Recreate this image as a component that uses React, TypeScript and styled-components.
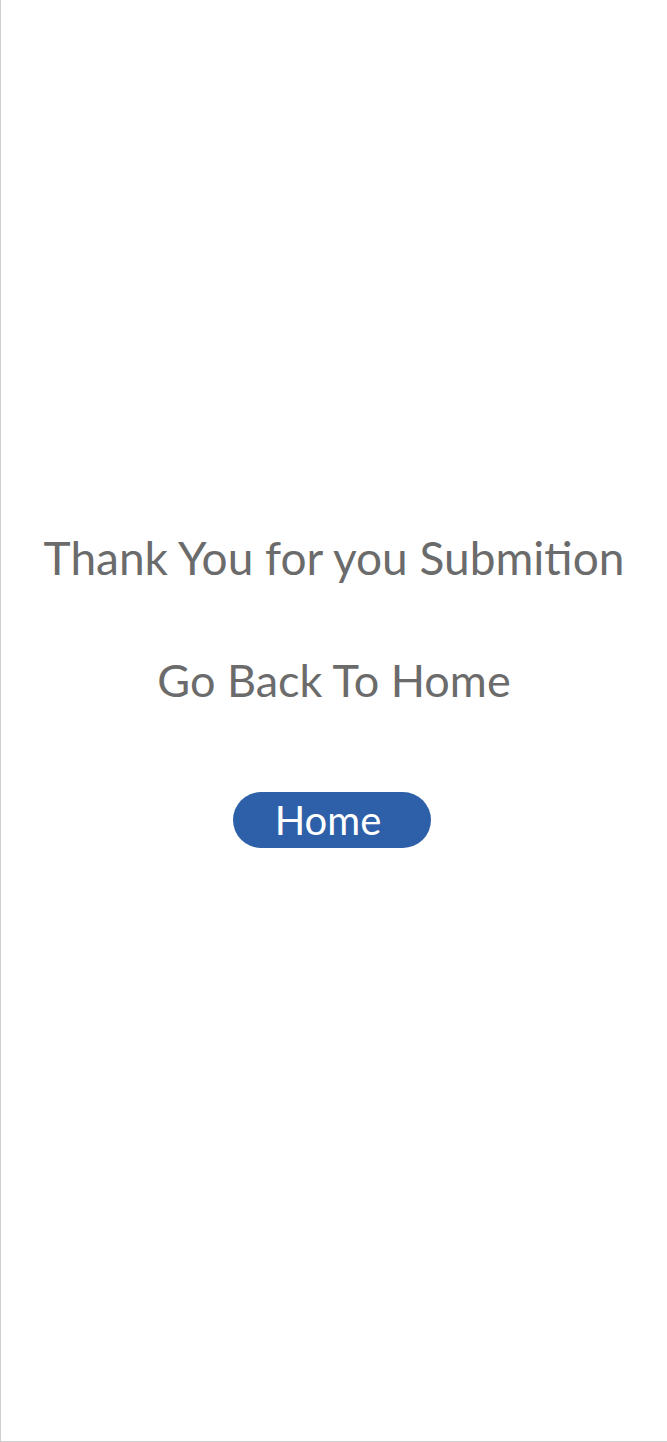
import React from "react";
import styled, { createGlobalStyle } from "styled-components";

const Global = createGlobalStyle`
  html, body { margin: 0; padding: 0; background: #fff; }
  * { box-sizing: border-box; }
`;

const Page = styled.div`
  width: 667px;
  height: 1442px;
  border-left: 1px solid #cfcfcf;
  border-bottom: 1px solid #cfcfcf;
  display: flex;
  flex-direction: column;
  align-items: center;
  padding-top: 528px;
  font-family: Lato, "Open Sans", sans-serif;
`;

const Title = styled.h1`
  margin: 0;
  font-weight: 400;
  font-size: 46px;
  line-height: 60px;
  color: #6b6b6b;
  text-align: center;
`;

const Sub = styled.h2`
  margin: 62px 0 0;
  font-weight: 400;
  font-size: 45px;
  line-height: 60px;
  color: #6b6b6b;
  text-align: center;
`;

const HomeButton = styled.button`
  margin-top: 82px;
  margin-left: -5px;
  width: 198px;
  height: 56px;
  border: none;
  border-radius: 28px;
  background: #2e60a9;
  color: #fff;
  font-family: Lato, "Open Sans", sans-serif;
  font-size: 40px;
  line-height: 56px;
  padding: 0 7px 2px 0;
  cursor: pointer;
`;

export default function App() {
  return (
    <>
      <Global />
      <Page>
        <Title>Thank You for you Submition</Title>
        <Sub>Go Back To Home</Sub>
        <HomeButton>Home</HomeButton>
      </Page>
    </>
  );
}
